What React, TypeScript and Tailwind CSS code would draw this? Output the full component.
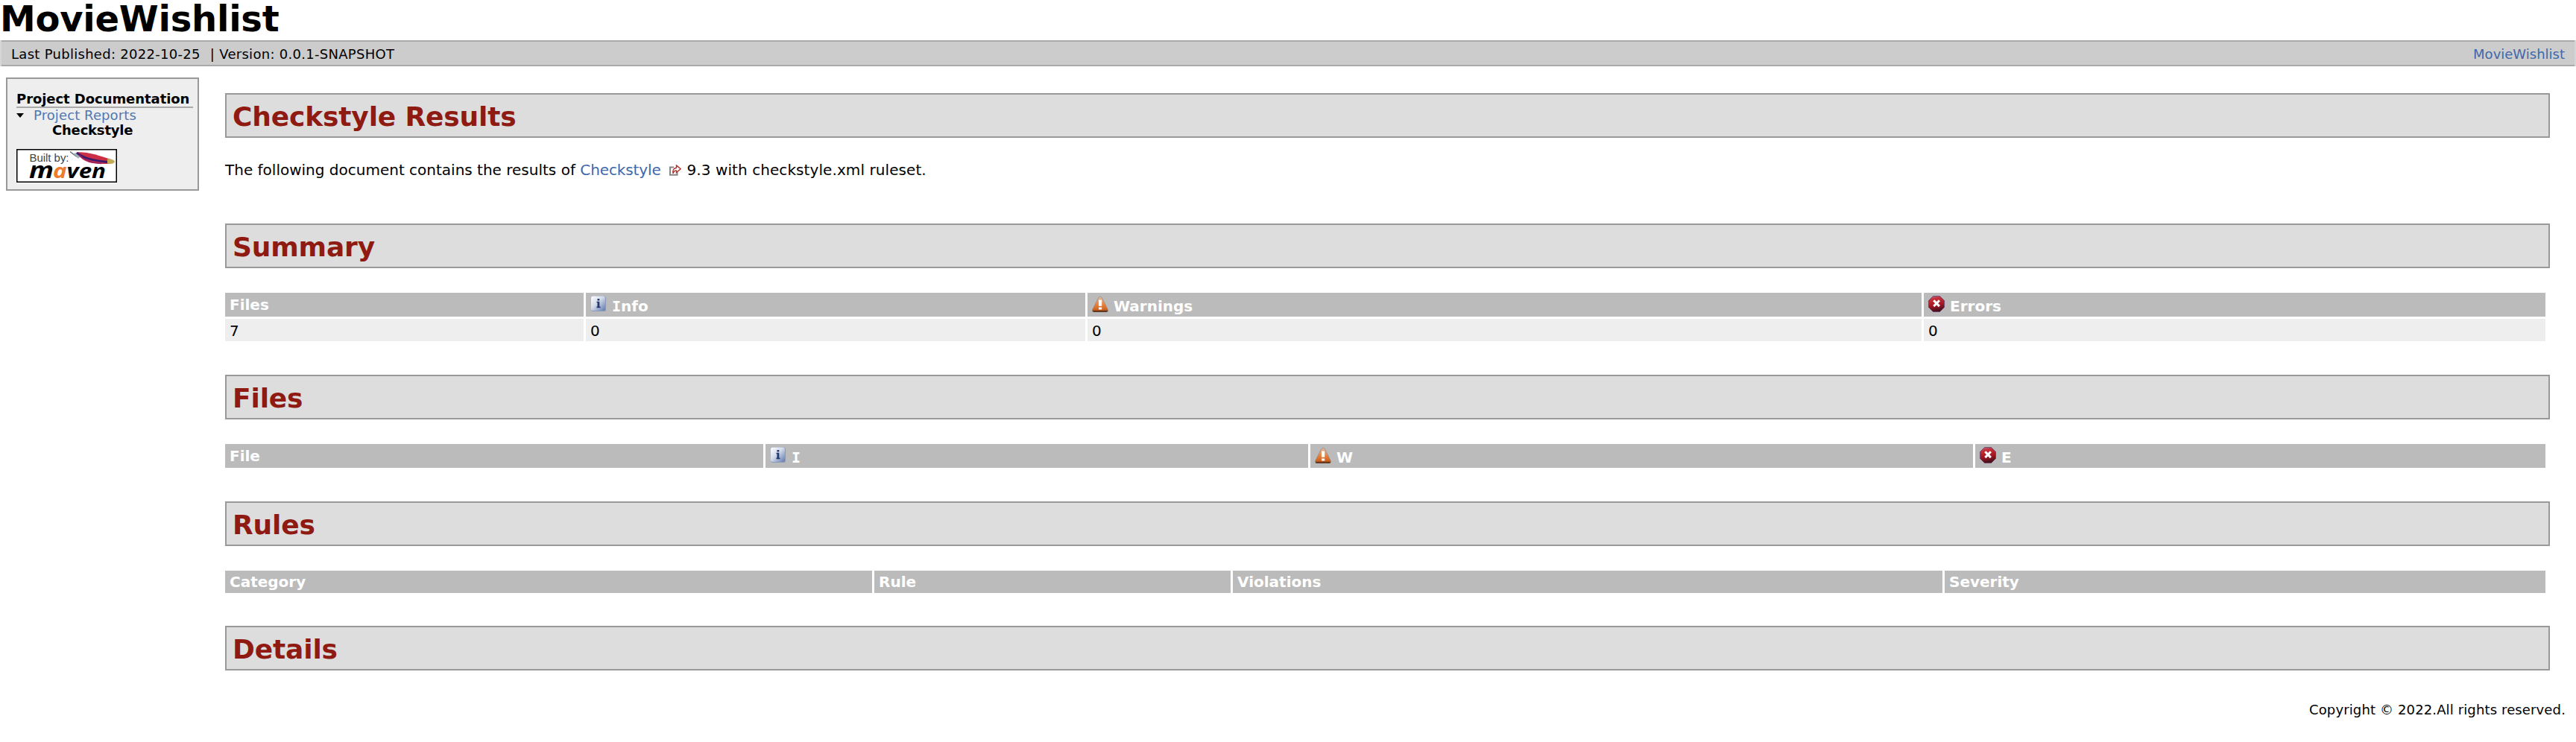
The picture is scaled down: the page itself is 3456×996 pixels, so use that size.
import { type ReactNode } from "react";

function InfoIcon() {
  return (
    <svg viewBox="0 0 22 22" className="h-[22px] w-[22px] shrink-0">
      <defs>
        <linearGradient id="info" x1="0" y1="0" x2="1" y2="1">
          <stop offset="0" stopColor="#ffffff" />
          <stop offset="0.45" stopColor="#d3dbea" />
          <stop offset="1" stopColor="#5f78ab" />
        </linearGradient>
      </defs>
      <rect x="1" y="0.5" width="20" height="20.5" rx="2.5" fill="#8c9ab8" />
      <rect x="1" y="0.5" width="19" height="19.5" rx="2.5" fill="url(#info)" />
      <path d="M9.5 4h2.8v2.6H9.5zM8.5 7.8h3.8v6.8h1.2v1.6h-5v-1.6h1V9.2h-1z" fill="#26396f" />
    </svg>
  );
}

function WarningIcon() {
  return (
    <svg viewBox="0 0 22 22" className="h-[22px] w-[22px] shrink-0">
      <defs>
        <linearGradient id="warn" x1="0" y1="0" x2="0" y2="1">
          <stop offset="0" stopColor="#e3b9a0" />
          <stop offset="0.5" stopColor="#e98440" />
          <stop offset="0.85" stopColor="#cf6420" />
          <stop offset="1" stopColor="#6a3010" />
        </linearGradient>
      </defs>
      <path d="M11 1.2Q12.6 1 13.5 3L21.3 18.5Q22 21.5 20 21.5H2Q0 21.5 0.7 18.5L8.5 3Q9.4 1 11 1.2Z" fill="url(#warn)" stroke="#84807f" strokeOpacity="0.7" strokeWidth="0.8" />
      <path d="M1.5 21.2H20.5" stroke="#3e2415" strokeWidth="1" />
      <path d="M9 5.5h4.2v8.2H9zM9 15.5h4.2v3H9z" fill="#ffffff" />
    </svg>
  );
}

function ErrorIcon() {
  return (
    <svg viewBox="0 0 22 22" className="h-[22px] w-[22px] shrink-0">
      <defs>
        <linearGradient id="err" x1="0" y1="0" x2="0.2" y2="1">
          <stop offset="0" stopColor="#b77fb0" />
          <stop offset="0.2" stopColor="#c8323b" />
          <stop offset="0.65" stopColor="#a31621" />
          <stop offset="1" stopColor="#4a0f1e" />
        </linearGradient>
      </defs>
      <path d="M6.5 0.6h9L21.5 6.5v9L15.5 21.5h-9L0.5 15.5v-9Z" fill="url(#err)" stroke="#6a4468" strokeWidth="0.9" />
      <path d="M7.3 6.3l7.6 7.8M14.9 6.3l-7.6 7.8" stroke="#ffffff" strokeWidth="3" />
    </svg>
  );
}

function ExternalIcon() {
  return (
    <svg viewBox="0 0 16 15" className="mr-[1px] ml-[5px] inline-block h-[15px] w-[16px] align-[-1px]">
      <path d="M6 3.5H1V13.8h9.5V10" fill="none" stroke="#858585" strokeWidth="2" />
      <path d="M5 11.8C4.2 7.3 6 4.7 9.5 4.2V0.9L15.2 5.7l-5.7 4.8V7.9C7.6 7.9 6 8.8 5 11.8Z" fill="#ffffff" stroke="#b0302b" strokeWidth="1.4" />
    </svg>
  );
}

function MavenLogo() {
  return (
    <svg viewBox="0 0 135 45" className="block h-[45px] w-[135px]">
      <rect x="0.75" y="0.75" width="133.5" height="43.5" fill="#ffffff" stroke="#000000" strokeWidth="1.5" />
      <text x="17.5" y="16.5" fontSize="15" textLength="53" fill="#444444" fontFamily="Liberation Sans, sans-serif">Built by:</text>
      <path d="M72 3.5l9 7" stroke="#555a66" strokeWidth="1.2" />
      <path d="M76 6l6-1 4 5-3 3z" fill="#9db4bd" />
      <path d="M81 4.5C91 3 111 8 129 15C131 18 126 20 118 20C104 20 88 19 81 4.5Z" fill="#cc2f45" />
      <path d="M81 5C90 13 106 16 122 17.5" stroke="#3d1a6b" strokeWidth="3" fill="none" />
      <path d="M84 8C92 16 104 19 114 19.5" stroke="#8c2065" strokeWidth="1.5" fill="none" />
      <path d="M122 13.5C128 13 132 15 132 17.5C130 20 126 20.5 122 19.5Z" fill="#c4ab55" />
      <g fontWeight="bold" fontStyle="italic" fill="#000000" fontFamily="Open Sans, sans-serif">
        <text x="17" y="39" fontSize="31" textLength="33" lengthAdjust="spacingAndGlyphs">m</text>
        <text x="49" y="39" fontSize="27" textLength="71" lengthAdjust="spacingAndGlyphs"><tspan fill="#ee7b30">a</tspan>ven</text>
      </g>
    </svg>
  );
}

function Heading({ children }: { children: ReactNode }) {
  return (
    <h2 className="h-[60px] border-2 border-[#999999] bg-[#dddddd] pl-[8px] text-[36px] leading-[59px] font-bold tracking-[-0.15px] text-[#8f1a11]">
      {children}
    </h2>
  );
}

/** Capital I drawn with serifs, so that it stays distinct from a lowercase l. */
function SerifI() {
  return <span className="[font-family:'DejaVu_Sans_Mono',monospace]">I</span>;
}

type Column = { id: string; label: ReactNode; icon?: ReactNode };

function Table({ columns, template, rows, headClass }: { columns: Column[]; template: string; rows?: string[][]; headClass: string }) {
  return (
    <div className={"grid w-[3113px] gap-[3px] text-[20px] " + template}>
      {columns.map((c) => (
        <div key={c.id} className={"flex bg-[#bbbbbb] pl-[6px] font-bold text-white " + headClass}>
          {c.icon ? (
            <>
              <div className="mt-[4px] mr-[7px]">{c.icon}</div>
              <div className="h-8 leading-[36px]">{c.label}</div>
            </>
          ) : (
            <div>{c.label}</div>
          )}
        </div>
      ))}
      {rows?.map((row) =>
        row.map((cell, i) => (
          <div key={i} className="h-[30px] bg-[#eeeeee] pl-[6px] leading-[33px]">
            {cell}
          </div>
        )),
      )}
    </div>
  );
}

export default function App() {
  return (
    <div className="min-h-[996px] w-[3456px] bg-white text-black [font-family:'DejaVu_Sans',Verdana,sans-serif]">
      <h1 className="h-[54px] text-[48px] leading-[51px] font-bold tracking-[-0.25px]">MovieWishlist</h1>
      <div className="border-x-2 border-[#d6d6d6]">
        <div className="flex h-[35px] justify-between border-y-2 border-[#aaaaaa] bg-[#cccccc] pr-[13px] pl-[13px] text-[18px] leading-[33px]">
          <div className="flex tracking-[0.29px]">
            <span>Last Published: 2022-10-25</span>
            <span className="ml-[13px]">|</span>
            <span className="ml-[6px]">Version: 0.0.1-SNAPSHOT</span>
          </div>
          <a className="text-[#4068ab]">MovieWishlist</a>
        </div>
      </div>
      <div className="flex">
        <aside className="mt-[15px] ml-[8px] h-[152px] w-[259px] shrink-0 border-2 border-[#999999] bg-[#eeeeee] pl-[12px] text-[18px]">
          <h5 className="mt-[16px] h-[23px] w-[237px] border-b-2 border-[#aaaaaa] leading-[22px] font-bold tracking-[-0.06px]">Project Documentation</h5>
          <div className="flex h-[20px] items-center leading-[20px]">
            <svg viewBox="0 0 10 6" className="mr-[13px] h-[6px] w-[10px]"><path d="M0 0h10L5 6z" fill="#000000" /></svg>
            <a className="tracking-[0.1px] text-[#5078b0]">Project Reports</a>
          </div>
          <div className="h-[35px] pl-[48px] leading-[20px] font-bold tracking-[-0.2px]">Checkstyle</div>
          <MavenLogo />
        </aside>
        <main className="mt-[36px] ml-[35px] w-[3119px]">
          <Heading>Checkstyle Results</Heading>
          <p className="mt-[28px] mb-[57px] h-[30px] text-[20px] leading-[30px]">
            The following document contains the results of <a className="tracking-[-0.1px] text-[#4068ab]">Checkstyle</a> <ExternalIcon /> <span className="tracking-[0.08px]">9.3 with checkstyle.xml ruleset.</span>
          </p>
          <Heading>Summary</Heading>
          <div className="mt-[33px] mb-[45px]">
            <Table
              headClass="h-8 leading-[32px]"
              template="grid-cols-[481px_670px_1119px_834px]"
              columns={[
                { id: "files", label: "Files" },
                { id: "info", label: <><SerifI />nfo</>, icon: <InfoIcon /> },
                { id: "warnings", label: "Warnings", icon: <WarningIcon /> },
                { id: "errors", label: "Errors", icon: <ErrorIcon /> },
              ]}
              rows={[["7", "0", "0", "0"]]}
            />
          </div>
          <Heading>Files</Heading>
          <div className="mt-[33px] mb-[45px]">
            <Table
              headClass="h-8 leading-[32px]"
              template="grid-cols-[722px_728px_889px_765px]"
              columns={[
                { id: "file", label: "File" },
                { id: "i", label: <SerifI />, icon: <InfoIcon /> },
                { id: "w", label: "W", icon: <WarningIcon /> },
                { id: "e", label: "E", icon: <ErrorIcon /> },
              ]}
            />
          </div>
          <Heading>Rules</Heading>
          <div className="mt-[33px] mb-[44px]">
            <Table
              headClass="h-[30px] leading-[30px]"
              template="grid-cols-[868px_478px_952px_806px]"
              columns={[
                { id: "category", label: "Category" },
                { id: "rule", label: "Rule" },
                { id: "violations", label: "Violations" },
                { id: "severity", label: "Severity" },
              ]}
            />
          </div>
          <Heading>Details</Heading>
        </main>
      </div>
      <footer className="mt-[37px] flex h-[32px] justify-end pr-[14px] text-[18px] leading-[32px] tracking-[0.13px]">Copyright © 2022.All rights reserved.</footer>
    </div>
  );
}
